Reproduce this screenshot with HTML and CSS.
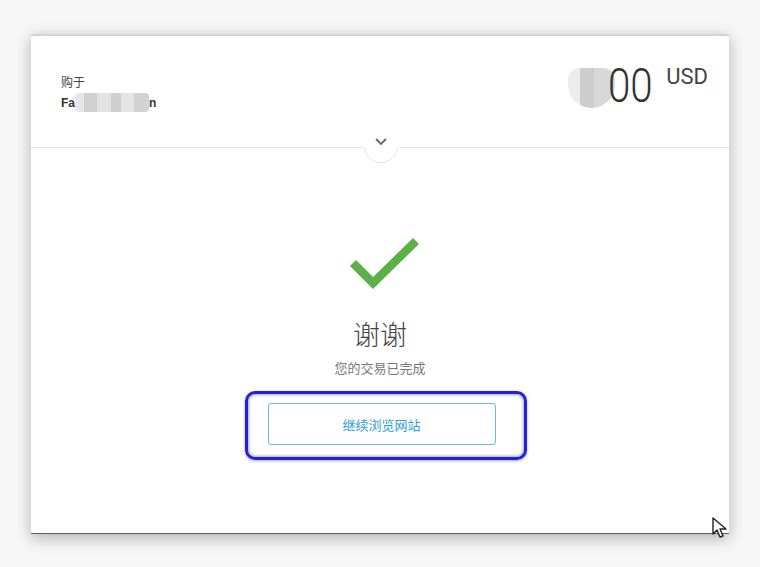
FILE: index.html
```html
<!DOCTYPE html>
<html lang="zh">
<head>
<meta charset="utf-8">
<link rel="stylesheet" href="styles.css">
</head>
<body>
<div class="page">
  <div class="card">
    <div class="header">
      <div class="merchant">
        <div class="label">购于</div>
        <div class="name">Fa<span class="blur-rect"></span>n</div>
      </div>
      <div class="amount">
        <span class="blur-circle"></span><span class="num">00</span><span class="cur">USD</span>
      </div>
      <div class="toggle">
        <svg width="14" height="9" viewBox="0 0 14 9"><path d="M2 2 L7 7 L12 2" fill="none" stroke="#666" stroke-width="1.8"/></svg>
      </div>
    </div>
    <div class="body">
      <svg class="check" width="72" height="54" viewBox="0 0 72 54"><path d="M4 26 L24 46 L67 4" fill="none" stroke="#5bb04a" stroke-width="8.5"/></svg>
      <div class="thanks">谢谢</div>
      <div class="done">您的交易已完成</div>
      <div class="focus">
        <button class="continue">继续浏览网站</button>
      </div>
    </div>
  </div>
  <svg class="cursor" width="16" height="22" viewBox="0 0 16 22"><path d="M1 1 L1 17 L5 13 L8 20 L11 19 L8 12 L14 12 Z" fill="#fff" stroke="#222" stroke-width="1.4" stroke-linejoin="round"/></svg>
</div>
</body>
</html>
```

FILE: styles.css
```css
html, body {
  margin: 0;
  padding: 0;
}
body {
  width: 760px;
  height: 567px;
  background: #f6f6f6;
  font-family: "Liberation Sans", Arial, "Noto Sans CJK SC", sans-serif;
  overflow: hidden;
}
.page {
  position: relative;
  width: 760px;
  height: 567px;
  padding-top: 34px;
  box-sizing: border-box;
}
.card {
  margin-left: 31px;
  width: 698px;
  height: 500px;
  background: #fff;
  border-top: 2px solid #d4d4d4;
  border-bottom: 1px solid #5a5a72;
  box-sizing: border-box;
  box-shadow: 0 4px 14px rgba(0,0,0,0.28);
  display: flex;
  flex-direction: column;
}
.header {
  position: relative;
  height: 112px;
  border-bottom: 1px solid #e2e2e2;
  display: flex;
  justify-content: space-between;
  align-items: flex-start;
  padding: 0 21px 0 30px;
  box-sizing: border-box;
  flex-shrink: 0;
}
.merchant {
  margin-top: 39px;
  font-size: 12px;
  color: #333;
}
.label {
  color: #444;
  line-height: 16px;
}
.name {
  font-weight: bold;
  line-height: 16px;
  margin-top: 2px;
  display: flex;
  align-items: center;
}
.blur-rect {
  display: inline-block;
  width: 74px;
  height: 19px;
  border-radius: 4px;
  background: linear-gradient(90deg, #e6e6e6 0 12%, #d0d0d0 12% 30%, #e2e2e2 30% 48%, #cfcfcf 48% 62%, #e4e4e4 62% 80%, #d2d2d2 80% 100%);
}
.amount {
  margin-top: 26px;
  display: flex;
  align-items: flex-start;
  color: #333;
}
.blur-circle {
  display: inline-block;
  width: 47px;
  height: 40px;
  margin-top: 6px;
  border-radius: 12px 12px 24px 24px;
  background: linear-gradient(90deg, #ececec 0 25%, #cdcdcd 25% 55%, #d8d8d8 55% 100%);
  margin-right: -7px;
}
.num {
  display: inline-block;
  font-family: Roboto, "Liberation Sans", sans-serif;
  font-size: 48px;
  font-weight: 300;
  line-height: 48px;
  color: #333;
  transform: scaleX(0.84);
  transform-origin: left center;
  margin-right: -8px;
}
.cur {
  font-family: Roboto, "Liberation Sans", sans-serif;
  font-size: 22px;
  line-height: 22px;
  margin-left: 13px;
  margin-top: 4px;
  color: #444;
}
.toggle {
  position: absolute;
  left: 333px;
  top: 93px;
  width: 34px;
  height: 34px;
  border-radius: 50%;
  background: #fff;
  border: 1px solid #e2e2e2;
  box-sizing: border-box;
  display: flex;
  justify-content: center;
  padding-top: 7px;
}
.toggle::before {
  content: "";
  position: absolute;
  left: -2px;
  right: -2px;
  top: -2px;
  height: 20px;
  background: #fff;
}
.toggle svg {
  position: relative;
}
.body {
  flex: 1;
  display: flex;
  flex-direction: column;
  align-items: center;
  padding-top: 89px;
}
.check {
  display: block;
  margin-left: 9px;
}
.thanks {
  margin-top: 28px;
  font-size: 27px;
  line-height: 30px;
  color: #444;
  font-family: "Noto Sans CJK SC", sans-serif;
  font-weight: 300;
}
.done {
  margin-top: 10px;
  font-size: 13px;
  line-height: 18px;
  color: #777;
  font-family: "Noto Sans CJK SC", sans-serif;
}
.focus {
  margin-top: 14px;
  margin-left: 11px;
  padding: 9px 28px 12px 20px;
  border: 3px solid #2020dd;
  border-radius: 10px;
  box-shadow: inset 0 0 3px 1px rgba(0,0,0,0.35), 0 1px 3px rgba(0,0,0,0.35);
}
.continue {
  width: 228px;
  height: 42px;
  background: #fff;
  border: 1px solid #66bfdc;
  border-radius: 3px;
  color: #2d9fd5;
  font-size: 13px;
  font-family: "Noto Sans CJK SC", sans-serif;
  display: block;
}
.cursor {
  position: absolute;
  left: 712px;
  top: 517px;
}
```
